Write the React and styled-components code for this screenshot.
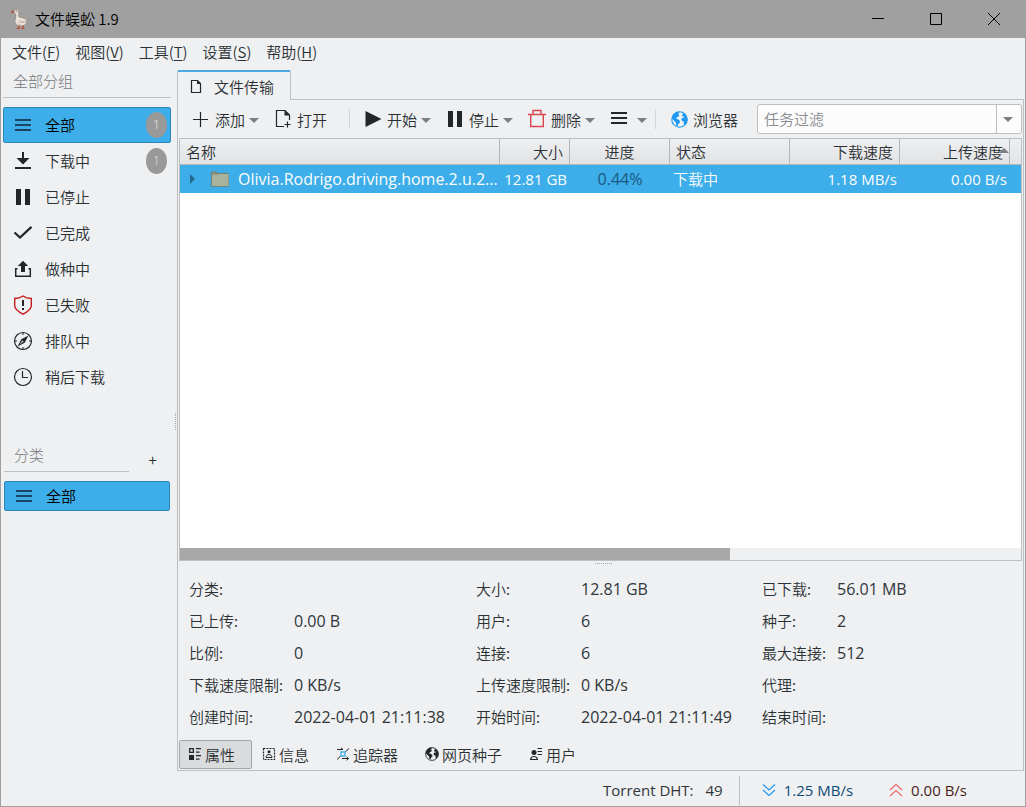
import styled, { createGlobalStyle } from "styled-components";

const GlobalStyle = createGlobalStyle`
  :root {
    --color-window: #eff0f1;
    --color-text: #2b3034;
    --color-muted: #75787b;
    --color-line: #bcbebf;
    --color-frame: #a0a0a0;
    --color-accent: #3daee9;
    --color-accent-dark: #2f86b8;
    --font-latin: "Open Sans", "Noto Sans", "Noto Sans CJK SC", sans-serif;
    --font-cjk: "Noto Sans CJK SC", "Open Sans", sans-serif;
  }

  *,
  *::before,
  *::after {
    box-sizing: border-box;
    margin: 0;
    padding: 0;
  }

  body {
    font-family: var(--font-cjk);
    font-size: 15px;
    font-weight: 350;
    line-height: 20px;
    color: var(--color-text);
    background-color: var(--color-window);
  }

  button,
  input {
    font: inherit;
    color: inherit;
    background: none;
    border: none;
  }

  svg {
    display: block;
    flex: none;
  }
`;

/* ---------- Icons ---------- */

const Svg = ({ size = 20, children }) => (
  <svg width={size} height={size} viewBox={`0 0 ${size} ${size}`} fill="none" aria-hidden="true">
    {children}
  </svg>
);

const ink = "#232629";

const GooseIcon = () => (
  <svg width="20" height="22" viewBox="0 0 20 22" aria-hidden="true">
    <path d="M1 3.6 4.2 2l1 2.2-2.6.8-1.2-.1z" fill="#b5523c" />
    <path
      d="M4 3.5C4.200 1 8.300.6 8.700 3.500c.2 2-.5 3.600.3 5.300 2 1.500 4.800.7 6.700 2.200l3.200.8-2.700 1.300c.6 2.600-1.500 4.600-4.600 4.900-3.400.3-6.300-1.200-6.600-4-.1-3 1.300-5 .8-7.800-.6-.5-1.700-1-1.800-2.700z"
      fill="#ece3dc"
      stroke="#8b7f78"
      strokeWidth=".7"
    />
    <path d="M8.500 11.500c2 2.500 5 2.400 7.500.6M9 13.500c2 1.400 3.800 1.300 5.500.6M7 14c.6 1.600 2 2.500 4 2.600" stroke="#b9aaa1" strokeWidth=".8" fill="none" />
    <circle cx="6.300" cy="3.300" r=".6" fill="#444" />
    <path d="M8 17.500v2.300l-3 1.300h4.600v-3.300zM12 17.500v2l-1.500 1.600h4.800l-1.700-1.300v-2.500z" fill="#b5523c" />
  </svg>
);

const MenuIcon = ({ color = ink }) => (
  <Svg>
    <path d="M2 4h16v2H2zM2 9h16v2H2zM2 14h16v2H2z" fill={color} />
  </Svg>
);

const DownloadIcon = () => (
  <Svg>
    <path d="M9 1h2v6h5.500L10 13.500 3.500 7H9zM2 16h16v2H2z" fill={ink} />
  </Svg>
);

const PauseIcon = () => (
  <Svg>
    <path d="M3 2h5v16H3zM12 2h5v16h-5z" fill={ink} />
  </Svg>
);

const CheckIcon = () => (
  <Svg>
    <path d="M1.500 9.500 7 14.500 18.500 3.800" stroke={ink} strokeWidth="2.300" />
  </Svg>
);

const UploadIcon = () => (
  <Svg>
    <path d="M10 1.800 15.200 7H12v6H8V7H4.800z" fill={ink} />
    <path d="M4.500 9.700H2.700v7.600h14.600V9.700h-1.800" stroke={ink} strokeWidth="1.500" />
  </Svg>
);

const FailedIcon = () => (
  <Svg>
    <path d="M10 1c2.500 1.700 5.300 2.400 8.300 2.500v7.300c0 4-4 6.200-8.300 8.300-4.300-2.100-8.300-4.300-8.300-8.300V3.500C4.700 3.400 7.500 2.700 10 1z" stroke="#c61b1b" strokeWidth="1.400" />
    <path d="M9 5h2v6H9zM9 13h2v2H9z" fill={ink} />
  </Svg>
);

const QueueIcon = () => (
  <Svg>
    <circle cx="10" cy="10" r="8.500" stroke={ink} strokeWidth="1.200" />
    <path d="M10 2v2M10 16v2M2 10h2M16 10h2" stroke={ink} />
    <path d="M15.500 4.500 11.700 11.700 4.500 15.500 8.300 8.300z" fill={ink} />
    <path d="m6.500 13.500 3-4 1 1z" fill="#eff0f1" />
  </Svg>
);

const ClockIcon = () => (
  <Svg>
    <circle cx="10" cy="10" r="8.500" stroke={ink} strokeWidth="1.200" />
    <path d="M9.500 4v6.500H15" stroke={ink} strokeWidth="1.200" />
  </Svg>
);

const PageIcon = () => (
  <Svg size={16}>
    <path d="M3.500 1.500h6l3 3v9h-9z" stroke={ink} strokeWidth="1.200" />
    <path d="M9 1v4h4z" fill={ink} />
  </Svg>
);

const PlusIcon = () => (
  <Svg size={22}>
    <path d="M3 10.500h15M10.500 3v15" stroke={ink} strokeWidth="1.200" />
  </Svg>
);

const OpenIcon = () => (
  <Svg size={22}>
    <path d="M12 17.500H4.500v-16h8.500l4.500 4.500v5" stroke={ink} strokeWidth="1.200" />
    <path d="M12.500 1v5.500H18z" fill={ink} />
    <path d="M12.500 15.500h6M15.500 12.500v6" stroke={ink} strokeWidth="1.200" />
  </Svg>
);

const PlayIcon = () => (
  <Svg size={22}>
    <path d="M3.500 2 19.500 10 3.500 18z" fill={ink} />
  </Svg>
);

const StopIcon = () => (
  <Svg size={22}>
    <path d="M4 2h5v16H4zM13 2h5v16h-5z" fill={ink} />
  </Svg>
);

const TrashIcon = () => (
  <Svg size={22}>
    <path d="M2 5.500h18M7 5.500V1.500h8v4M4.700 5.500v12h12.600v-12" stroke="#da4453" strokeWidth="1.400" />
  </Svg>
);

const ListIcon = () => (
  <Svg size={22}>
    <path d="M3 3h16v2H3zM3 8h16v2H3zM3 13h16v2H3z" fill={ink} />
  </Svg>
);

const GlobeIcon = ({ size, color }) => (
  <svg width={size} height={size} viewBox="0 0 16 16" aria-hidden="true">
    <circle cx="8" cy="8" r="7.300" fill="none" stroke={color} strokeWidth="1" />
    <path d="M.9 7.200C.9 4 3.500 1 7.200.7l.6 1.200L6.500 3l1.300.6-.4 1.500-1.700.6L4.900 7.300l1.700.5 1.900 1.500-.2 1.700-1.400 1-.5 2.400-1.500-1.200-.3-2.400-1.700-1.700z" fill={color} />
    <path d="M10.300 1.500c3 .9 5 3.500 5 6.500 0 2.100-.9 4-2.500 5.300l-.9-1.500.3-1.900-1.800-.6-.8-1.500 1.400-1.500 1.600-.1-.5-1.200-1.800.1.200-1.400 1-.8z" fill={color} />
  </svg>
);

const FolderIcon = () => (
  <svg width="18" height="16" viewBox="0 0 18 16" aria-hidden="true">
    <path d="M.5 1h5l1 1.500h11v12.800H.5z" fill="#8a9682" stroke="#71806f" />
    <path d="M1 4h5l1-1h10.500v12H1z" fill="#a9b29b" />
  </svg>
);

const PropsIcon = () => (
  <Svg size={14}>
    <path d="M1.700 1.700h3.600v3.600H1.700z" stroke={ink} strokeWidth="1.300" />
    <path d="M1 8h5v5H1zM8 1h5v1.300H8zM8 4.500h3.500v1.300H8zM8 8h5v1.300H8zM8 11.500h3.500v1.300H8z" fill={ink} />
  </Svg>
);

const InfoIcon = () => (
  <Svg size={14}>
    <path d="M1.500 1.500h11v11h-11z" stroke={ink} strokeWidth="1.200" strokeDasharray="2 1" />
    <circle cx="7" cy="4.800" r="1.500" fill={ink} />
    <path d="M4 10.500c0-2 1.500-3 3-3s3 1 3 3z" stroke={ink} />
  </Svg>
);

const TrackerIcon = () => (
  <Svg size={14}>
    <path d="M1 2.500h6M5 .8l2 1.700M13 1.500 9.200 5M4.800 9 1 12.500M6 11.500h6.500M10.500 9.800l2 1.700-2 1.700" stroke={ink} />
    <path d="M5 5h4v4H5z" stroke="#3daee9" strokeWidth="1.300" />
  </Svg>
);

const PeersIcon = () => (
  <Svg size={14}>
    <circle cx="5" cy="5.500" r="2.500" fill={ink} />
    <path d="M1.600 12.500c.2-2.300 1.600-3 3.400-3s3.200.7 3.400 3z" stroke={ink} strokeWidth="1.200" />
    <path d="M8.500 1.500H13M8.500 4.500H13M8.500 7.500H13" stroke={ink} strokeWidth="1.100" />
  </Svg>
);

const ChevronsIcon = ({ color, up }) => (
  <Svg size={14}>
    <path d={up ? "M1 7l6-5.500L13 7M1 13l6-5.500L13 13" : "M1 1.500 7 7l6-5.500M1 7l6 5.500L13 7"} stroke={color} strokeWidth="1.200" />
  </Svg>
);

/* ---------- Window ---------- */

const Window = styled.div`
  min-height: 100vh;
  display: flex;
  flex-direction: column;
  border: 1px solid var(--color-frame);
  border-top: none;
  background-color: var(--color-window);
`;

const TitleBar = styled.header`
  height: 38px;
  display: flex;
  align-items: center;
  padding-left: 9px;
  gap: 5px;
  background-color: var(--color-frame);
  color: #000;
`;

const Title = styled.h1`
  flex: 1;
  font-size: 15px;
  font-weight: 350;
  line-height: 20px;
`;

const WindowButton = styled.button`
  width: 58px;
  height: 38px;
  display: flex;
  align-items: center;
  justify-content: center;
`;

const WindowButtons = styled.div`
  display: flex;
  padding-right: 2px;
`;

const MenuBar = styled.nav`
  height: 32px;
  display: flex;
  align-items: flex-start;
  gap: 1px;
  padding-left: 4px;
`;

const MenuItem = styled.button`
  height: 28px;
  padding: 0 7px;

  u {
    text-underline-offset: 2px;
  }
`;

const Body = styled.div`
  flex: 1;
  display: flex;
  padding-right: 1px;
`;

/* ---------- Sidebar ---------- */

const Sidebar = styled.aside`
  width: 176px;
  flex: none;
  display: flex;
  flex-direction: column;
  position: relative;
  padding: 0 6px 0 2px;
`;

const GroupTitle = styled.h2`
  height: 28px;
  padding: 1px 10px 0;
  margin-bottom: 9px;
  border-bottom: 1px solid var(--color-line);
  font-size: 15px;
  font-weight: 300;
  color: var(--color-muted);
`;

const List = styled.ul`
  list-style: none;
`;

const ListButton = styled.button`
  width: 100%;
  height: ${(props) => (props.$compact ? "30px" : "36px")};
  display: flex;
  align-items: center;
  gap: 12px;
  padding: 0 3px 0 9px;
  border: 1px solid ${(props) => (props.$active ? "var(--color-accent-dark)" : "transparent")};
  border-radius: 2px;
  background-color: ${(props) => (props.$active ? "var(--color-accent)" : "transparent")};
  color: ${(props) => (props.$active ? "#000" : "inherit")};
`;

const Badge = styled.span`
  width: 21px;
  height: 26px;
  margin-left: auto;
  border-radius: 50%;
  background-color: #999;
  color: #e6e6e6;
  font-family: var(--font-latin);
  font-size: 12px;
  line-height: 26px;
  text-align: center;
`;

const Category = styled.section`
  margin-top: 48px;
  padding: 0 1px;
`;

const CategoryHead = styled.div`
  display: flex;
  margin-bottom: 9px;

  h2 {
    flex: 1;
    height: 29px;
    padding: 2px 10px 0;
    border-bottom: 1px solid var(--color-line);
    font-size: 15px;
    font-weight: 300;
    color: var(--color-muted);
  }

  button {
    width: 41px;
    height: 29px;
    padding: 4px 0 0 6px;
    font-size: 15px;
  }
`;

const Grip = styled.span`
  position: absolute;
  ${(props) =>
    props.$vertical
      ? "right: 1px; top: 343px; height: 17px; border-right: 1px dotted #a5a7a8;"
      : "left: calc(50% - 6px); top: 2px; width: 17px; border-top: 1px dotted #a5a7a8;"}
`;

/* ---------- Main ---------- */

const Main = styled.main`
  flex: 1;
  min-width: 0;
  display: flex;
  flex-direction: column;
`;

const TabStrip = styled.div`
  display: flex;

  &::after {
    content: "";
    flex: 1;
    border-bottom: 1px solid var(--color-line);
  }
`;

const PageTab = styled.button`
  height: 30px;
  display: flex;
  align-items: center;
  gap: 10px;
  padding: 2px 16px 0 10px;
  border: 1px solid var(--color-line);
  border-top: 2px solid #48a9dc;
  border-bottom: none;
  border-radius: 2px 2px 0 0;
`;

const Pane = styled.section`
  flex: 1;
  display: flex;
  flex-direction: column;
  padding: 0 1px;
  border: 1px solid var(--color-line);
  border-top: none;
`;

const Toolbar = styled.div`
  height: 38px;
  display: flex;
  align-items: center;
  padding-left: 4px;
`;

const ToolButton = styled.button`
  height: 32px;
  display: flex;
  align-items: center;
  gap: 3px;
  padding: 2px 6px 0 7px;
  white-space: nowrap;
`;

const Caret = styled.span`
  width: 0;
  height: 0;
  margin-left: ${(props) => (props.$spaced ? "4px" : "1px")};
  border: 5px solid transparent;
  border-top-color: #7b7e80;
  border-bottom: none;
`;

const Divider = styled.span`
  width: 1px;
  height: 20px;
  margin: 0 5px 0 ${(props) => (props.$spaced ? "16px" : "2px")};
  background-color: #d3d5d6;
`;

const Combo = styled.div`
  flex: 1;
  min-width: 0;
  height: 30px;
  display: flex;
  margin-left: 13px;
  border: 1px solid var(--color-line);
  border-radius: 3px;
  background-color: #fcfcfc;

  input {
    flex: 1;
    min-width: 0;
    padding: 0 6px;

    &::placeholder {
      color: #8a8d8f;
      opacity: 1;
    }
  }

  button {
    width: 25px;
    display: flex;
    align-items: center;
    justify-content: center;
    padding-right: 4px;
    border-left: 1px solid var(--color-line);
  }
`;

const TableFrame = styled.div`
  flex: 1;
  display: flex;
  flex-direction: column;
  border: 1px solid var(--color-line);
  background-color: #fff;
  overflow: hidden;
`;

const Table = styled.table`
  width: 100%;
  table-layout: fixed;
  border-collapse: separate;
  border-spacing: 0;
`;

const Th = styled.th`
  position: relative;
  height: 26px;
  padding: 0 6px;
  border-right: 1px solid #b4b6b7;
  border-bottom: 1px solid #b4b6b7;
  background: linear-gradient(#eeeff0, #e2e3e5);
  font-weight: 350;
  text-align: ${(props) => props.$align || "left"};
  white-space: nowrap;

  &:last-child {
    border-right: none;
    padding: 0;
  }
`;

const SortMark = styled.span`
  position: absolute;
  right: 0;
  top: 9px;
  border: 5px solid transparent;
  border-bottom-color: #7b7e80;
  border-top: none;
`;

const Td = styled.td`
  height: 28px;
  padding: 0 3px;
  background-color: var(--color-accent);
  color: ${(props) => (props.$dark ? "#1b587f" : "#fcfcfc")};
  font-family: ${(props) => (props.$cjk ? "var(--font-cjk)" : "var(--font-latin)")};
  font-size: ${(props) => (props.$cjk || props.$align === "right" ? "15px" : "16px")};
  font-weight: ${(props) => (props.$cjk ? 350 : 400)};
  text-align: ${(props) => props.$align || "left"};
  white-space: nowrap;
`;

const TaskName = styled.div`
  display: flex;
  align-items: center;
  padding-left: 7px;

  svg {
    margin: 0 9px 0 16px;
  }
`;

const Expander = styled.button`
  width: 5px;
  height: 10px;
  border: 5px solid transparent;
  border-left-color: #25688f;
  border-right: none;
`;

const ScrollTrack = styled.div`
  height: 12px;
  margin-top: auto;
  background-color: var(--color-window);
`;

const ScrollThumb = styled.div`
  width: 65.4%;
  height: 100%;
  background-color: #a8a8a8;
`;

const Details = styled.dl`
  position: relative;
  display: grid;
  grid-template-columns: 105px minmax(0, 182fr) 105px minmax(0, 181fr) 75px minmax(0, 185fr);
  grid-auto-rows: 32px;
  align-items: center;
  padding: 12px 0 7px 10px;
  white-space: nowrap;

  dd {
    font-family: var(--font-latin);
    font-size: 16px;
    font-weight: 400;
    color: #31363b;
  }
`;

const DetailTabs = styled.div`
  display: flex;
  gap: 1px;
  padding-bottom: 1px;
`;

const DetailTab = styled.button`
  height: 29px;
  display: flex;
  align-items: center;
  gap: 3px;
  padding: 0 16px 0 8px;
  border: 1px solid ${(props) => (props.$active ? "#a3a5a6" : "transparent")};
  border-radius: 2px;
  background-color: ${(props) => (props.$active ? "#dadbdc" : "transparent")};

  svg {
    margin-bottom: 2px;
  }
`;

const StatusBar = styled.footer`
  height: 35px;
  display: flex;
  align-items: center;
  justify-content: flex-end;
  padding: 3px 58px 0 0;
  font-family: var(--font-latin);
  font-size: 15px;
  font-weight: 400;
  color: #31363b;
`;

const StatusRule = styled.span`
  width: 1px;
  height: 29px;
  margin: 0 22px 0 16px;
  background-color: var(--color-line);
`;

const Speed = styled.span`
  display: flex;
  align-items: center;
  gap: 8px;
  color: ${(props) => props.$color};

  & + & {
    margin-left: 36px;
  }
`;

const DhtCount = styled.span`
  margin-left: 12px;
`;

/* ---------- Data ---------- */

const menus = [
  ["文件", "F"],
  ["视图", "V"],
  ["工具", "T"],
  ["设置", "S"],
  ["帮助", "H"],
];

const groups = [
  { label: "全部", icon: <MenuIcon color="#1d4562" />, count: 1, active: true },
  { label: "下载中", icon: <DownloadIcon />, count: 1 },
  { label: "已停止", icon: <PauseIcon /> },
  { label: "已完成", icon: <CheckIcon /> },
  { label: "做种中", icon: <UploadIcon /> },
  { label: "已失败", icon: <FailedIcon /> },
  { label: "排队中", icon: <QueueIcon /> },
  { label: "稍后下载", icon: <ClockIcon /> },
];

const details = [
  ["分类:", ""],
  ["大小:", "12.81 GB"],
  ["已下载:", "56.01 MB"],
  ["已上传:", "0.00 B"],
  ["用户:", "6"],
  ["种子:", "2"],
  ["比例:", "0"],
  ["连接:", "6"],
  ["最大连接:", "512"],
  ["下载速度限制:", "0 KB/s"],
  ["上传速度限制:", "0 KB/s"],
  ["代理:", ""],
  ["创建时间:", "2022-04-01 21:11:38"],
  ["开始时间:", "2022-04-01 21:11:49"],
  ["结束时间:", ""],
];

const detailTabs = [
  { label: "属性", icon: <PropsIcon />, active: true },
  { label: "信息", icon: <InfoIcon /> },
  { label: "追踪器", icon: <TrackerIcon /> },
  { label: "网页种子", icon: <GlobeIcon size={14} color={ink} /> },
  { label: "用户", icon: <PeersIcon /> },
];

/* ---------- Sections ---------- */

function Header() {
  return (
    <>
      <TitleBar>
        <GooseIcon />
        <Title>文件蜈蚣 1.9</Title>
        <WindowButtons>
          <WindowButton aria-label="最小化">
            <svg width="12" height="12" viewBox="0 0 12 12">
              <path d="M0 5.500h12" stroke="#000" />
            </svg>
          </WindowButton>
          <WindowButton aria-label="最大化">
            <svg width="12" height="12" viewBox="0 0 12 12">
              <path d="M.5.5h11v11H.5z" stroke="#000" fill="none" />
            </svg>
          </WindowButton>
          <WindowButton aria-label="关闭">
            <svg width="12" height="12" viewBox="0 0 12 12">
              <path d="M0 0l12 12M12 0 0 12" stroke="#000" />
            </svg>
          </WindowButton>
        </WindowButtons>
      </TitleBar>
      <MenuBar>
        {menus.map(([label, key]) => (
          <MenuItem key={key}>
            {label}(<u>{key}</u>)
          </MenuItem>
        ))}
      </MenuBar>
    </>
  );
}

function SidePanel() {
  return (
    <Sidebar>
      <GroupTitle>全部分组</GroupTitle>
      <List>
        {groups.map((group) => (
          <li key={group.label}>
            <ListButton $active={group.active}>
              {group.icon}
              {group.label}
              {group.count && <Badge>{group.count}</Badge>}
            </ListButton>
          </li>
        ))}
      </List>
      <Category>
        <CategoryHead>
          <h2>分类</h2>
          <button aria-label="添加分类">+</button>
        </CategoryHead>
        <ListButton $active $compact>
          <MenuIcon color="#1d4562" />
          全部
        </ListButton>
      </Category>
      <Grip $vertical />
    </Sidebar>
  );
}

function Tools() {
  return (
    <Toolbar>
      <ToolButton>
        <PlusIcon />
        添加
        <Caret />
      </ToolButton>
      <ToolButton>
        <OpenIcon />
        打开
      </ToolButton>
      <Divider $spaced />
      <ToolButton>
        <PlayIcon />
        开始
        <Caret />
      </ToolButton>
      <ToolButton>
        <StopIcon />
        停止
        <Caret />
      </ToolButton>
      <ToolButton>
        <TrashIcon />
        删除
        <Caret />
      </ToolButton>
      <ToolButton aria-label="列表">
        <ListIcon />
        <Caret $spaced />
      </ToolButton>
      <Divider />
      <ToolButton>
        <Svg size={22}>
          <svg x="3" y="2">
            <GlobeIcon size={17} color="#1d99f3" />
          </svg>
        </Svg>
        浏览器
      </ToolButton>
      <Combo>
        <input type="text" placeholder="任务过滤" aria-label="任务过滤" />
        <button aria-label="展开">
          <Caret />
        </button>
      </Combo>
    </Toolbar>
  );
}

function TaskTable() {
  return (
    <TableFrame>
      <Table>
        <colgroup>
          <col style={{ width: 320 }} />
          <col style={{ width: 70 }} />
          <col style={{ width: 100 }} />
          <col style={{ width: 120 }} />
          <col style={{ width: 110 }} />
          <col style={{ width: 110 }} />
          <col />
        </colgroup>
        <thead>
          <tr>
            <Th>名称</Th>
            <Th $align="right">大小</Th>
            <Th $align="center">进度</Th>
            <Th>状态</Th>
            <Th $align="right">下载速度</Th>
            <Th $align="right">
              上传速度
              <SortMark />
            </Th>
            <Th />
          </tr>
        </thead>
        <tbody>
          <tr>
            <Td>
              <TaskName>
                <Expander aria-label="展开任务" />
                <FolderIcon />
                Olivia.Rodrigo.driving.home.2.u.2...
              </TaskName>
            </Td>
            <Td $align="right">12.81 GB</Td>
            <Td $align="center" $dark>
              0.44%
            </Td>
            <Td $cjk>下载中</Td>
            <Td $align="right">1.18 MB/s</Td>
            <Td $align="right">0.00 B/s</Td>
            <Td />
          </tr>
        </tbody>
      </Table>
      <ScrollTrack>
        <ScrollThumb />
      </ScrollTrack>
    </TableFrame>
  );
}

function TaskDetails() {
  return (
    <>
      <Details>
        {details.map(([label, value]) => [
          <dt key={label}>{label}</dt>,
          <dd key={label + "value"}>{value}</dd>,
        ])}
        <Grip />
      </Details>
      <DetailTabs>
        {detailTabs.map((tab) => (
          <DetailTab key={tab.label} $active={tab.active}>
            {tab.icon}
            {tab.label}
          </DetailTab>
        ))}
      </DetailTabs>
    </>
  );
}

function App() {
  return (
    <>
      <GlobalStyle />
      <Window>
        <Header />
        <Body>
          <SidePanel />
          <Main>
            <TabStrip>
              <PageTab>
                <PageIcon />
                文件传输
              </PageTab>
            </TabStrip>
            <Pane>
              <Tools />
              <TaskTable />
              <TaskDetails />
            </Pane>
          </Main>
        </Body>
        <StatusBar>
          <span>Torrent DHT:</span>
          <DhtCount>49</DhtCount>
          <StatusRule />
          <Speed $color="#0f4a77">
            <ChevronsIcon color="#1d99f3" />
            1.25 MB/s
          </Speed>
          <Speed $color="#4a1d1d">
            <ChevronsIcon color="#ed6a6a" up />
            0.00 B/s
          </Speed>
        </StatusBar>
      </Window>
    </>
  );
}

export default App;
